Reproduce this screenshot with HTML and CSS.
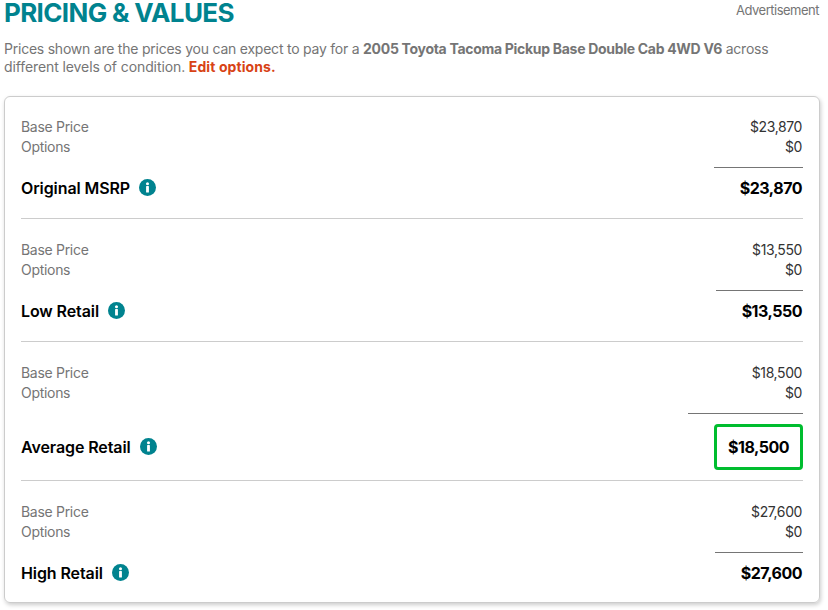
FILE: index.html
```html
<!DOCTYPE html>
<html lang="en">
<head>
<meta charset="utf-8">
<title>Pricing &amp; Values</title>
<link rel="stylesheet" href="styles.css">
</head>
<body>
<header class="head">
  <h1 class="title">PRICING &amp; VALUES</h1>
  <span class="ad">Advertisement</span>
</header>
<p class="intro">Prices shown are the prices you can expect to pay for a <strong>2005 Toyota Tacoma Pickup Base Double Cab 4WD V6</strong> across <span class="intro-end">different levels of condition.</span> <a class="edit" href="#">Edit options.</a></p>
<main class="card">
  <section class="block">
    <div class="row"><span class="label">Base Price</span><span class="val">$23,870</span></div>
    <div class="row"><span class="label">Options</span><span class="val">$0</span></div>
    <div class="total">
      <div class="name">Original MSRP<svg class="info" viewBox="0 0 18 18"><circle cx="9" cy="9" r="9" fill="#00838f"/><circle cx="9" cy="5" r="1.6" fill="#fff"/><rect x="7.5" y="7.5" width="3" height="6.8" rx=".6" fill="#fff"/></svg></div>
      <div class="sum"><span class="amount">$23,870</span></div>
    </div>
  </section>
  <section class="block">
    <div class="row"><span class="label">Base Price</span><span class="val">$13,550</span></div>
    <div class="row"><span class="label">Options</span><span class="val">$0</span></div>
    <div class="total">
      <div class="name">Low Retail<svg class="info" viewBox="0 0 18 18"><circle cx="9" cy="9" r="9" fill="#00838f"/><circle cx="9" cy="5" r="1.6" fill="#fff"/><rect x="7.5" y="7.5" width="3" height="6.8" rx=".6" fill="#fff"/></svg></div>
      <div class="sum"><span class="amount">$13,550</span></div>
    </div>
  </section>
  <section class="block">
    <div class="row"><span class="label">Base Price</span><span class="val">$18,500</span></div>
    <div class="row"><span class="label">Options</span><span class="val">$0</span></div>
    <div class="total">
      <div class="name">Average Retail<svg class="info" viewBox="0 0 18 18"><circle cx="9" cy="9" r="9" fill="#00838f"/><circle cx="9" cy="5" r="1.6" fill="#fff"/><rect x="7.5" y="7.5" width="3" height="6.8" rx=".6" fill="#fff"/></svg></div>
      <div class="sum sum-hl"><span class="amount amount-hl">$18,500</span></div>
    </div>
  </section>
  <section class="block">
    <div class="row"><span class="label">Base Price</span><span class="val">$27,600</span></div>
    <div class="row"><span class="label">Options</span><span class="val">$0</span></div>
    <div class="total">
      <div class="name">High Retail<svg class="info" viewBox="0 0 18 18"><circle cx="9" cy="9" r="9" fill="#00838f"/><circle cx="9" cy="5" r="1.6" fill="#fff"/><rect x="7.5" y="7.5" width="3" height="6.8" rx=".6" fill="#fff"/></svg></div>
      <div class="sum"><span class="amount">$27,600</span></div>
    </div>
  </section>
</main>
</body>
</html>
```
FILE: styles.css
```css
* { box-sizing: border-box; }
html, body { margin: 0; padding: 0; }
body {
  width: 828px;
  height: 610px;
  overflow: hidden;
  background: #fff;
  font-family: Inter, "Noto Sans", sans-serif;
  color: #757575;
}
.head {
  display: flex;
  justify-content: space-between;
  align-items: flex-start;
  padding: 0 9px 0 4px;
  height: 26px;
}
.title {
  margin: 0;
  font-size: 26px;
  line-height: 26px;
  font-weight: 700;
  color: #00838f;
  letter-spacing: -0.65px;
}
.ad { font-size: 13px; line-height: 20px; letter-spacing: -0.5px; }
.intro {
  margin: 14px 8px 0 4px;
  font-size: 14px;
  line-height: 18px;
  letter-spacing: -0.23px;
}
.intro strong { font-weight: 700; letter-spacing: -0.3px; }
.intro-end { letter-spacing: -0.1px; }
.edit { color: #d84315; font-weight: 700; letter-spacing: 0.1px; text-decoration: none; }
.card {
  margin: 20px 8px 0 4px;
  width: 816px;
  height: 507px;
  padding: 0 16px;
  border: 1px solid #ccc;
  border-radius: 6px;
  box-shadow: 1px 2px 4px rgba(0, 0, 0, .2);
}
.block { margin-top: 1px; padding-top: 20px; border-bottom: 1px solid #ccc; height: 122px; }
.block:nth-child(1) { margin-top: 0; }
.block:nth-child(3) { height: 138px; }
.block:last-child { border-bottom: 0; }
.row {
  display: flex;
  justify-content: space-between;
  font-size: 14px;
  line-height: 20px;
  letter-spacing: -0.3px;
}
.val { color: #333; padding-right: 1px; letter-spacing: -0.4px; }
.total { display: flex; justify-content: space-between; }
.name {
  display: flex;
  align-items: center;
  padding-top: 21px;
  font-size: 16px;
  line-height: 20px;
  font-weight: 600;
  letter-spacing: -0.1px;
  color: #000;
}
.info { width: 17px; height: 17px; margin: 0 0 2px 9px; }
.sum {
  margin-top: 10px;
  padding: 10px 0 0 26px;
  border-top: 1px solid #757575;
}
.amount {
  display: block;
  padding-right: 1px;
  font-size: 16px;
  line-height: 20px;
  font-weight: 700;
  letter-spacing: -0.5px;
  color: #000;
}
.amount-hl {
  padding: 10px 11px;
  border: 3px solid #00bd2f;
  border-radius: 4px;
}
```
